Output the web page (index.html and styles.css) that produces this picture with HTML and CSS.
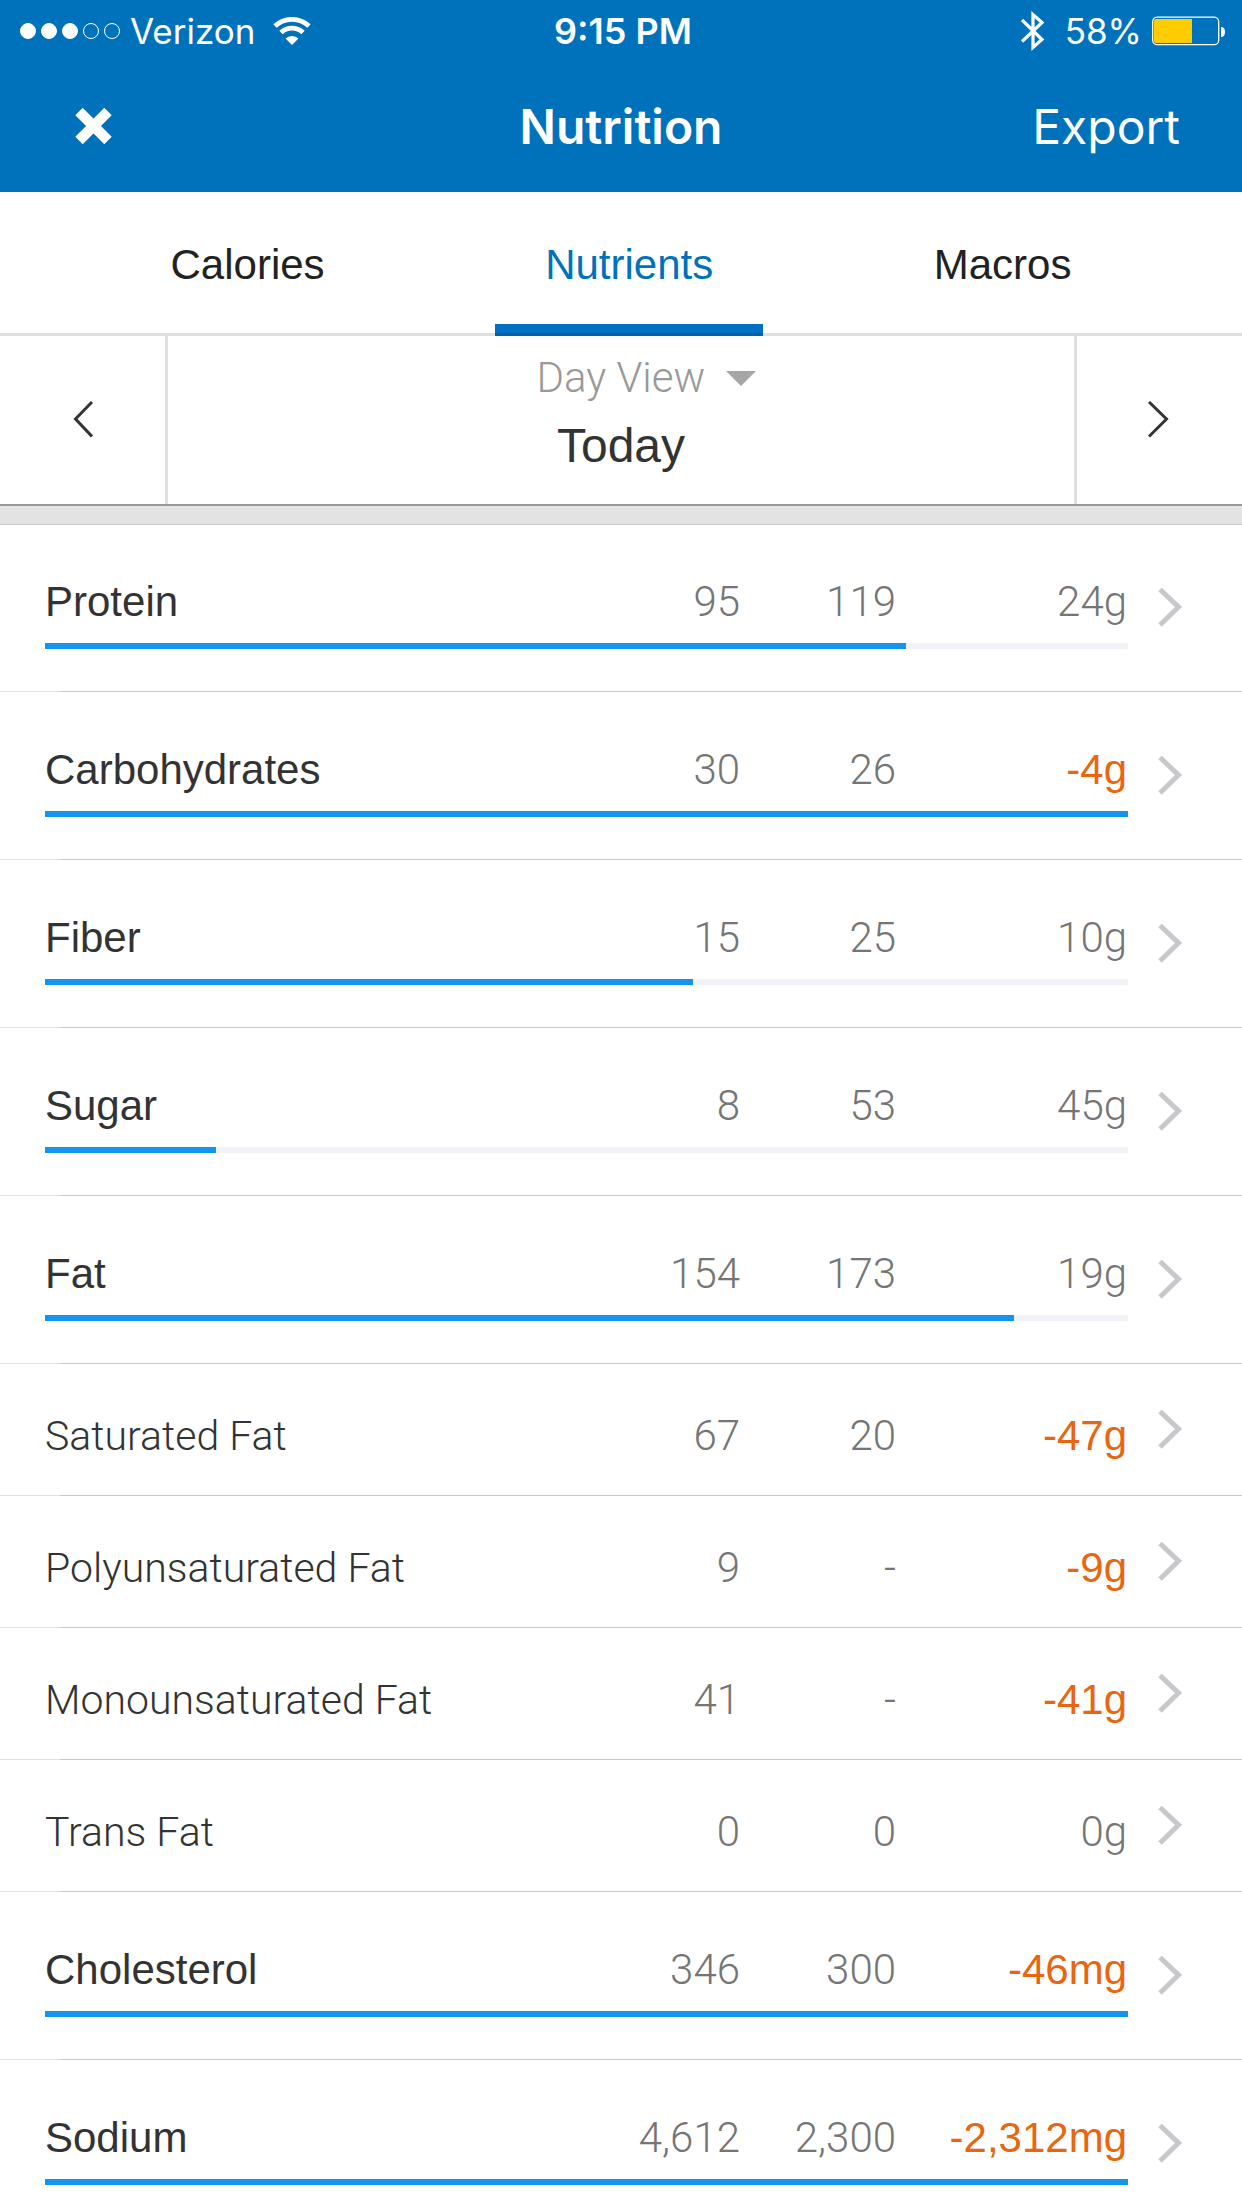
FILE: index.html
```html
<!DOCTYPE html>
<html lang="en">
<head>
    <meta charset="UTF-8">
    <meta name="viewport" content="width=device-width, initial-scale=1.0">
    <title>Nutrition</title>
    <link rel="stylesheet" href="styles.css">
</head>
<body>
    <!-- shared row arrow -->
    <svg class="sprite" aria-hidden="true">
        <symbol id="chevron" viewBox="0 0 24 40">
            <path d="M2 1.500 L20.500 19 L2 37" fill="none" stroke="currentColor" stroke-width="5"/>
        </symbol>
    </svg>

    <div class="app">
        <header class="header">
            <div class="status-bar">
                <div class="status-left">
                    <div class="signal">
                        <span class="dot full"></span>
                        <span class="dot full"></span>
                        <span class="dot full"></span>
                        <span class="dot"></span>
                        <span class="dot"></span>
                    </div>
                    <span>Verizon</span>
                    <svg class="wifi" width="38" height="28" viewBox="0 0 38 28">
                        <path d="M2 9 A25 25 0 0 1 36 9" fill="none" stroke="#fff" stroke-width="4.800"/>
                        <path d="M8 15.500 A16 16 0 0 1 30 15.500" fill="none" stroke="#fff" stroke-width="4.800"/>
                        <path d="M12.500 21.500 A9.500 9.500 0 0 1 25.500 21.500 L19 28 Z" fill="#fff"/>
                    </svg>
                </div>
                <span class="time">9:15 PM</span>
                <div class="status-right">
                    <svg class="bluetooth" width="24" height="42" viewBox="0 0 24 42">
                        <path d="M1 10 L21 29.500 L12 37.500 V4.500 L21 12.500 L1 31.500" fill="none" stroke="#fff" stroke-width="3.200"/>
                    </svg>
                    <span>58%</span>
                    <svg class="battery" width="74" height="30" viewBox="0 0 74 30">
                        <path d="M2 5 Q2 3 4 3 H40 V27 H4 Q2 27 2 25 Z" fill="#fc0"/>
                        <rect x="0.700" y="1.200" width="66" height="27.500" rx="4.500" fill="none" stroke="#fff" stroke-width="1.300"/>
                        <path d="M69 11 Q73 11 73 16 Q73 21 69 21 Z" fill="#fff"/>
                    </svg>
                </div>
            </div>
            <div class="nav-bar">
                <button class="close-btn" aria-label="Close">
                    <svg width="38" height="38" viewBox="0 0 38 38">
                        <path d="M4 3.500 L33 32.500 M33 3.500 L4 32.500" stroke="#fff" stroke-width="10.500"/>
                    </svg>
                </button>
                <h1 class="title">Nutrition</h1>
                <button class="export-btn">Export</button>
            </div>
        </header>

        <nav class="tabs">
            <a class="tab" href="#calories">Calories</a>
            <a class="tab active" href="#nutrients" aria-current="page">Nutrients</a>
            <a class="tab" href="#macros">Macros</a>
        </nav>

        <div class="date-nav">
            <button class="date-btn" aria-label="Previous day">
                <svg width="20" height="38" viewBox="0 0 20 38">
                    <path d="M19 1 L2.500 18 L19 35.500" fill="none" stroke="#333" stroke-width="3"/>
                </svg>
            </button>
            <div class="date-center">
                <label class="view-picker">
                    <select class="view-select" aria-label="View">
                        <option>Day View</option>
                    </select>
                    <svg class="caret" width="30" height="15" viewBox="0 0 30 15">
                        <path d="M0 0 H30 L15 15 Z" fill="#a6a6a6"/>
                    </svg>
                </label>
                <div class="date">Today</div>
            </div>
            <button class="date-btn" aria-label="Next day">
                <svg width="24" height="38" viewBox="0 0 24 38">
                    <path d="M1 1 L18.500 18 L1 35.500" fill="none" stroke="#333" stroke-width="3"/>
                </svg>
            </button>
        </div>

        <div class="band"></div>

        <main class="content">
            <table class="nutrients">
                <tbody>
                    <tr class="row main">
                        <th class="name" scope="row">Protein</th>
                        <td class="num">95</td>
                        <td class="num">119</td>
                        <td class="num">24g</td>
                        <td class="more"><a href="#protein" aria-label="Protein details"><svg class="chevron"><use href="#chevron"/></svg></a></td>
                        <td class="bar"><div class="fill" style="width: 79.5%"></div></td>
                    </tr>
                    <tr class="row main">
                        <th class="name" scope="row">Carbohydrates</th>
                        <td class="num">30</td>
                        <td class="num">26</td>
                        <td class="num over">-4g</td>
                        <td class="more"><a href="#carbohydrates" aria-label="Carbohydrates details"><svg class="chevron"><use href="#chevron"/></svg></a></td>
                        <td class="bar"><div class="fill" style="width: 100%"></div></td>
                    </tr>
                    <tr class="row main">
                        <th class="name" scope="row">Fiber</th>
                        <td class="num">15</td>
                        <td class="num">25</td>
                        <td class="num">10g</td>
                        <td class="more"><a href="#fiber" aria-label="Fiber details"><svg class="chevron"><use href="#chevron"/></svg></a></td>
                        <td class="bar"><div class="fill" style="width: 59.8%"></div></td>
                    </tr>
                    <tr class="row main">
                        <th class="name" scope="row">Sugar</th>
                        <td class="num">8</td>
                        <td class="num">53</td>
                        <td class="num">45g</td>
                        <td class="more"><a href="#sugar" aria-label="Sugar details"><svg class="chevron"><use href="#chevron"/></svg></a></td>
                        <td class="bar"><div class="fill" style="width: 15.8%"></div></td>
                    </tr>
                    <tr class="row main">
                        <th class="name" scope="row">Fat</th>
                        <td class="num">154</td>
                        <td class="num">173</td>
                        <td class="num">19g</td>
                        <td class="more"><a href="#fat" aria-label="Fat details"><svg class="chevron"><use href="#chevron"/></svg></a></td>
                        <td class="bar"><div class="fill" style="width: 89.5%"></div></td>
                    </tr>
                    <tr class="row sub">
                        <th class="name" scope="row">Saturated Fat</th>
                        <td class="num">67</td>
                        <td class="num">20</td>
                        <td class="num over">-47g</td>
                        <td class="more"><a href="#saturated" aria-label="Saturated Fat details"><svg class="chevron"><use href="#chevron"/></svg></a></td>
                    </tr>
                    <tr class="row sub">
                        <th class="name" scope="row">Polyunsaturated Fat</th>
                        <td class="num">9</td>
                        <td class="num">-</td>
                        <td class="num over">-9g</td>
                        <td class="more"><a href="#polyunsaturated" aria-label="Polyunsaturated Fat details"><svg class="chevron"><use href="#chevron"/></svg></a></td>
                    </tr>
                    <tr class="row sub">
                        <th class="name" scope="row">Monounsaturated Fat</th>
                        <td class="num">41</td>
                        <td class="num">-</td>
                        <td class="num over">-41g</td>
                        <td class="more"><a href="#monounsaturated" aria-label="Monounsaturated Fat details"><svg class="chevron"><use href="#chevron"/></svg></a></td>
                    </tr>
                    <tr class="row sub">
                        <th class="name" scope="row">Trans Fat</th>
                        <td class="num">0</td>
                        <td class="num">0</td>
                        <td class="num">0g</td>
                        <td class="more"><a href="#trans" aria-label="Trans Fat details"><svg class="chevron"><use href="#chevron"/></svg></a></td>
                    </tr>
                    <tr class="row main">
                        <th class="name" scope="row">Cholesterol</th>
                        <td class="num">346</td>
                        <td class="num">300</td>
                        <td class="num over">-46mg</td>
                        <td class="more"><a href="#cholesterol" aria-label="Cholesterol details"><svg class="chevron"><use href="#chevron"/></svg></a></td>
                        <td class="bar"><div class="fill" style="width: 100%"></div></td>
                    </tr>
                    <tr class="row main">
                        <th class="name" scope="row">Sodium</th>
                        <td class="num">4,612</td>
                        <td class="num">2,300</td>
                        <td class="num over">-2,312mg</td>
                        <td class="more"><a href="#sodium" aria-label="Sodium details"><svg class="chevron"><use href="#chevron"/></svg></a></td>
                        <td class="bar"><div class="fill" style="width: 100%"></div></td>
                    </tr>
                </tbody>
            </table>
        </main>
    </div>
</body>
</html>
```
FILE: styles.css
```css
:root {
    --header-blue: #0072bc;
    --tab-blue: #0070c2;
    --bar-blue: #1295ee;
    --bar-track: #f1f1f6;
    --line: #e0e0e0;
    --separator: #c8c8c8;
    --text: #333;
    --text-muted: #757575;
    --over: #e86610;
    --font: 'Liberation Sans', Arial, sans-serif;
    --font-light: Roboto, 'Liberation Sans', sans-serif;
    --font-system: Inter, 'Liberation Sans', sans-serif;
}

* {
    margin: 0;
    padding: 0;
    box-sizing: border-box;
}

body {
    font-family: var(--font);
    font-size: 42px;
    line-height: 48px;
    color: var(--text);
    background-color: #fff;
}

button,
select {
    font: inherit;
    color: inherit;
    background: none;
    border: none;
    cursor: pointer;
}

svg {
    display: block;
}

a {
    color: inherit;
    text-decoration: none;
}

.sprite {
    position: absolute;
    width: 0;
    height: 0;
}

.app {
    display: flex;
    flex-direction: column;
    height: 100vh;
}

/* Header */
.header {
    flex: none;
    background-color: var(--header-blue);
    color: #fff;
    font-family: var(--font-system);
}

.status-bar {
    display: grid;
    grid-template-columns: 1fr auto 1fr;
    align-items: center;
    height: 61px;
    padding: 0 16px 0 20px;
    font-size: 35px;
    line-height: 44px;
}

.status-left,
.status-right {
    display: flex;
    align-items: center;
}

.status-right {
    justify-content: flex-end;
}

.signal {
    display: flex;
    gap: 5px;
    margin-right: 10px;
}

.dot {
    width: 16px;
    height: 16px;
    border: 1px solid #fff;
    border-radius: 50%;
}

.dot.full {
    background-color: #fff;
}

.wifi {
    margin-left: 18px;
}

.time {
    font-size: 36px;
    font-weight: 600;
}

.bluetooth {
    margin-right: 20px;
}

.battery {
    margin-left: 10px;
}

.nav-bar {
    display: grid;
    grid-template-columns: 1fr auto 1fr;
    align-items: center;
    height: 131px;
    padding: 0 62px;
    font-size: 48px;
    line-height: 60px;
}

.close-btn {
    justify-self: start;
    margin-left: 13px;
}

.title {
    font-size: 48px;
    font-weight: 600;
}

.export-btn {
    justify-self: end;
}

/* Tabs */
.tabs {
    flex: none;
    display: flex;
    justify-content: space-evenly;
    box-shadow: inset 0 -3px 0 var(--line);
}

.tab {
    padding: 49px 50px 47px;
    color: #222;
}

.tab.active {
    color: var(--header-blue);
    background: linear-gradient(var(--tab-blue) 75%, #0061a8 75%) bottom / 100% 12px no-repeat;
}

/* Date navigation */
.date-nav {
    flex: none;
    display: flex;
    border-bottom: 2px solid #999;
}

.date-btn {
    display: flex;
    align-items: center;
    justify-content: center;
    width: 165px;
}

.date-center {
    flex: 1;
    padding: 18px 0 30px;
    border-left: 3px solid var(--line);
    border-right: 3px solid var(--line);
    text-align: center;
}

.view-picker {
    display: grid;
    grid-template-columns: 1fr auto 1fr;
    align-items: center;
    margin-bottom: 16px;
}

.view-select {
    grid-column: 2;
    appearance: none;
    font-family: var(--font-light);
    font-weight: 300;
    color: #999;
}

.caret {
    margin-left: 20px;
}

.date {
    font-size: 48px;
    line-height: 56px;
}

.band {
    flex: none;
    height: 18px;
    background-color: #e3e3e3;
    box-shadow: 0 1px 0 #c8c7cc;
}

/* Nutrient list */
.content {
    flex: 1;
    min-height: 0;
    overflow-y: auto;
    scrollbar-width: none;
}

.nutrients,
.nutrients tbody {
    display: block;
}

.row {
    display: grid;
    grid-template-columns: 1fr auto 156px 231px 54px;
    padding: 0 60px 1px 45px;
    background: linear-gradient(to right, var(--line) 60px, var(--separator) 60px) bottom / 100% 1px no-repeat;
}

.name {
    font-weight: 400;
    text-align: left;
}

.num {
    font-family: var(--font-light);
    font-weight: 300;
    color: var(--text-muted);
    text-align: right;
}

.num.over {
    font-family: var(--font);
    font-weight: 400;
    color: var(--over);
}

.main .name,
.main .num {
    padding: 54px 1px 0 0;
}

.sub .name,
.sub .num {
    padding: 48px 1px 35px 0;
}

.sub .name {
    font-family: var(--font-light);
    font-size: 41px;
    font-weight: 300;
}

.more {
    display: flex;
    align-items: center;
    justify-content: flex-end;
    color: #c7c7cc;
}

.main .more {
    grid-column: 5;
    grid-row: 1 / 3;
}

.chevron {
    width: 24px;
    height: 40px;
}

.bar {
    grid-column: 1 / 5;
    grid-row: 2;
    height: 6px;
    margin: 17px 0 42px;
    background-color: var(--bar-track);
}

.fill {
    height: 6px;
    background-color: var(--bar-blue);
}
```
